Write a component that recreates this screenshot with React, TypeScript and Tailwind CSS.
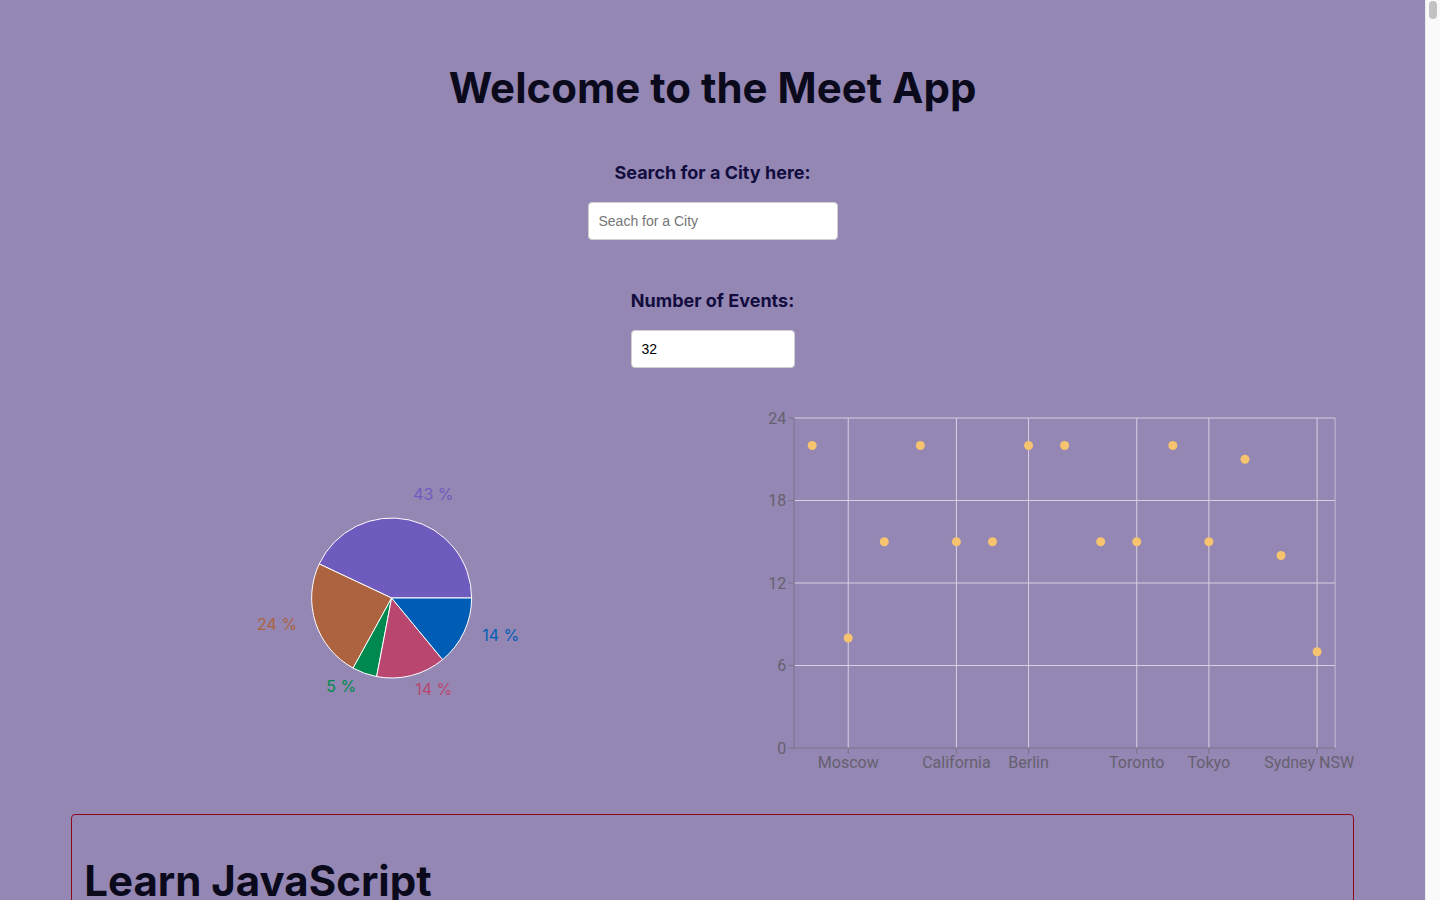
import React from "react";

// ---- Chart data ----
const genres = [
    { name: "React", pct: 43, color: "#6f5bbe" },
    { name: "JavaScript", pct: 24, color: "#ad6340" },
    { name: "Node", pct: 5, color: "#00894f" },
    { name: "jQuery", pct: 14, color: "#b8466f" },
    { name: "Angular", pct: 14, color: "#005db5" },
];

const pieLabels = [
    { text: "43 %", x: 342, y: 96, anchor: "start", color: "#6f5bbe" },
    { text: "24 %", x: 226, y: 226, anchor: "end", color: "#ad6340" },
    { text: "5 %", x: 285, y: 288, anchor: "end", color: "#00894f" },
    { text: "14 %", x: 344, y: 291, anchor: "start", color: "#b8466f" },
    { text: "14 %", x: 411, y: 237, anchor: "start", color: "#005db5" },
];

const cities = [
    { city: "London", count: 22 },
    { city: "Moscow", count: 8 },
    { city: "Paris", count: 15 },
    { city: "Rome", count: 22 },
    { city: "California", count: 15 },
    { city: "Dubai", count: 15 },
    { city: "Berlin", count: 22 },
    { city: "Madrid", count: 22 },
    { city: "Seoul", count: 15 },
    { city: "Toronto", count: 15 },
    { city: "Mumbai", count: 22 },
    { city: "Tokyo", count: 15 },
    { city: "Glasgow", count: 21 },
    { city: "Dublin", count: 14 },
    { city: "Sydney NSW", count: 7 },
];

const shownTicks = [1, 4, 6, 9, 11, 14];
const chartFont = "Roboto, 'Liberation Sans', sans-serif";

function EventGenresChart() {
    const cx = 320.5;
    const cy = 200;
    const r = 80;
    const pt = (deg: number) => {
        const a = (deg * Math.PI) / 180;
        return `${cx + r * Math.cos(a)} ${cy - r * Math.sin(a)}`;
    };
    let start = 0;
    const slices = genres.map((g) => {
        const sweep = (g.pct / 100) * 360;
        const end = start + sweep;
        const d = `M ${cx} ${cy} L ${pt(start)} A ${r} ${r} 0 ${sweep > 180 ? 1 : 0} 0 ${pt(end)} Z`;
        start = end;
        return <path key={g.name} d={d} fill={g.color} stroke="#fff" strokeWidth={1} />;
    });
    return (
        <svg width="100%" height="400" viewBox="0 0 641 400" className="block overflow-visible">
            {slices}
            {pieLabels.map((l, i) => (
                <text
                    key={i}
                    x={l.x}
                    y={l.y}
                    fill={l.color}
                    textAnchor={l.anchor as "start" | "end"}
                    dominantBaseline="central"
                    fontSize="16"
                    fontFamily="Inter, sans-serif"
                >
                    {l.text}
                </text>
            ))}
        </svg>
    );
}

function CityEventsChart() {
    const left = 81;
    const right = 622;
    const top = 20;
    const bottom = 350;
    const step = (right - left) / cities.length;
    const xOf = (i: number) => left + step * (i + 0.5);
    const yOf = (v: number) => top + ((24 - v) / 24) * (bottom - top);

    return (
        <svg width="100%" height="400" viewBox="0 0 641 400" className="block overflow-visible" fontFamily={chartFont}>
            {/* grid */}
            {[24, 18, 12, 6].map((v) => (
                <line key={v} x1={left} x2={right} y1={yOf(v)} y2={yOf(v)} stroke="#d6d2e2" strokeWidth={1} />
            ))}
            {shownTicks.map((i) => (
                <line key={i} x1={xOf(i)} x2={xOf(i)} y1={top} y2={bottom} stroke="#d6d2e2" strokeWidth={1} />
            ))}
            <line x1={right} x2={right} y1={top} y2={bottom} stroke="#c4bed6" strokeWidth={1} />

            {/* y axis */}
            <line x1={left} x2={left} y1={top} y2={bottom} stroke="#7a748a" strokeWidth={1} />
            {[24, 18, 12, 6, 0].map((v) => (
                <g key={v}>
                    <line x1={left - 6} x2={left} y1={yOf(v)} y2={yOf(v)} stroke="#7a748a" />
                    <text x={left - 8} y={yOf(v)} textAnchor="end" dominantBaseline="central" fontSize="16" fill="#666070">
                        {v}
                    </text>
                </g>
            ))}

            {/* x axis */}
            <line x1={left} x2={right} y1={bottom} y2={bottom} stroke="#7a748a" strokeWidth={1} />
            {shownTicks.map((i) => {
                const last = i === cities.length - 1;
                return (
                    <g key={i}>
                        <line x1={xOf(i)} x2={xOf(i)} y1={bottom} y2={bottom + 6} stroke="#7a748a" />
                        <text
                            x={last ? 641 : xOf(i)}
                            y={bottom + 14}
                            textAnchor={last ? "end" : "middle"}
                            dominantBaseline="central"
                            fontSize="16"
                            fill="#666070"
                        >
                            {cities[i].city}
                        </text>
                    </g>
                );
            })}

            {/* points */}
            {cities.map((c, i) => (
                <circle key={c.city} cx={xOf(i)} cy={yOf(c.count)} r={4.5} fill="#f6c36e" />
            ))}
        </svg>
    );
}

export default function App() {
    return (
        <div className="flex h-screen overflow-hidden bg-[#9487b3]" style={{ fontFamily: "Inter, 'Noto Sans', sans-serif" }}>
            <main className="flex-1 min-w-0 text-center">
                <h1 className="pt-[62px] text-[42px] leading-[52px] font-bold text-[#0b0a1c]">Welcome to the Meet App</h1>

                {/* City search */}
                <div className="mt-[48px] flex flex-col items-center">
                    <label className="text-[18px] leading-[22px] font-bold text-[#120d3e]">Search for a City here:</label>
                    <input
                        type="text"
                        placeholder="Seach for a City"
                        className="mt-[18px] w-[250px] h-[38px] px-[10px] bg-white border border-[#cfcfcf] rounded-[4px] text-[14px] text-black placeholder:text-[#757575] outline-none"
                        style={{ fontFamily: "'Liberation Sans', Arial, sans-serif" }}
                    />
                </div>

                {/* Number of events */}
                <div className="mt-[50px] flex flex-col items-center">
                    <label className="text-[18px] leading-[22px] font-bold text-[#120d3e]">Number of Events:</label>
                    <input
                        type="number"
                        defaultValue={32}
                        className="mt-[18px] w-[164px] h-[38px] px-[10px] bg-white border border-[#cfcfcf] rounded-[4px] text-[14px] text-black outline-none"
                        style={{ fontFamily: "'Liberation Sans', Arial, sans-serif" }}
                    />
                </div>

                {/* Charts */}
                <div className="mt-[30px] mx-auto w-[90%] flex">
                    <div className="flex-1">
                        <EventGenresChart />
                    </div>
                    <div className="flex-1">
                        <CityEventsChart />
                    </div>
                </div>

                {/* Event list */}
                <ul className="mt-[16px] mx-auto w-[90%] pb-10 flex flex-col gap-4 text-left">
                    {["Learn JavaScript", "React is Fun", "jQuery is Cool"].map((t) => (
                        <li key={t} className="border border-[#8b0a1a] rounded-[4px] px-[12px] pt-[40px] pb-5">
                            <h2 className="text-[42px] leading-[52px] font-bold text-[#0b0a1c]">{t}</h2>
                            <p className="mt-3 text-[16px] text-[#120d3e]">2020-05-19T16:00:00+02:00 (Europe/Berlin)</p>
                            <p className="mt-1 text-[16px] text-[#120d3e]">@javascript | London, UK</p>
                            <button className="mt-3 px-3 py-1 rounded-[4px] bg-[#2b2358] text-white text-sm">show details</button>
                        </li>
                    ))}
                </ul>
            </main>

            {/* Scrollbar */}
            <div className="w-[15px] shrink-0 bg-[#fafafa] border-l border-[#ececec] pt-[1px] pl-[3px]">
                <div className="w-[8px] h-[18px] rounded-full bg-[#c2c2c2]" />
            </div>
        </div>
    );
}
